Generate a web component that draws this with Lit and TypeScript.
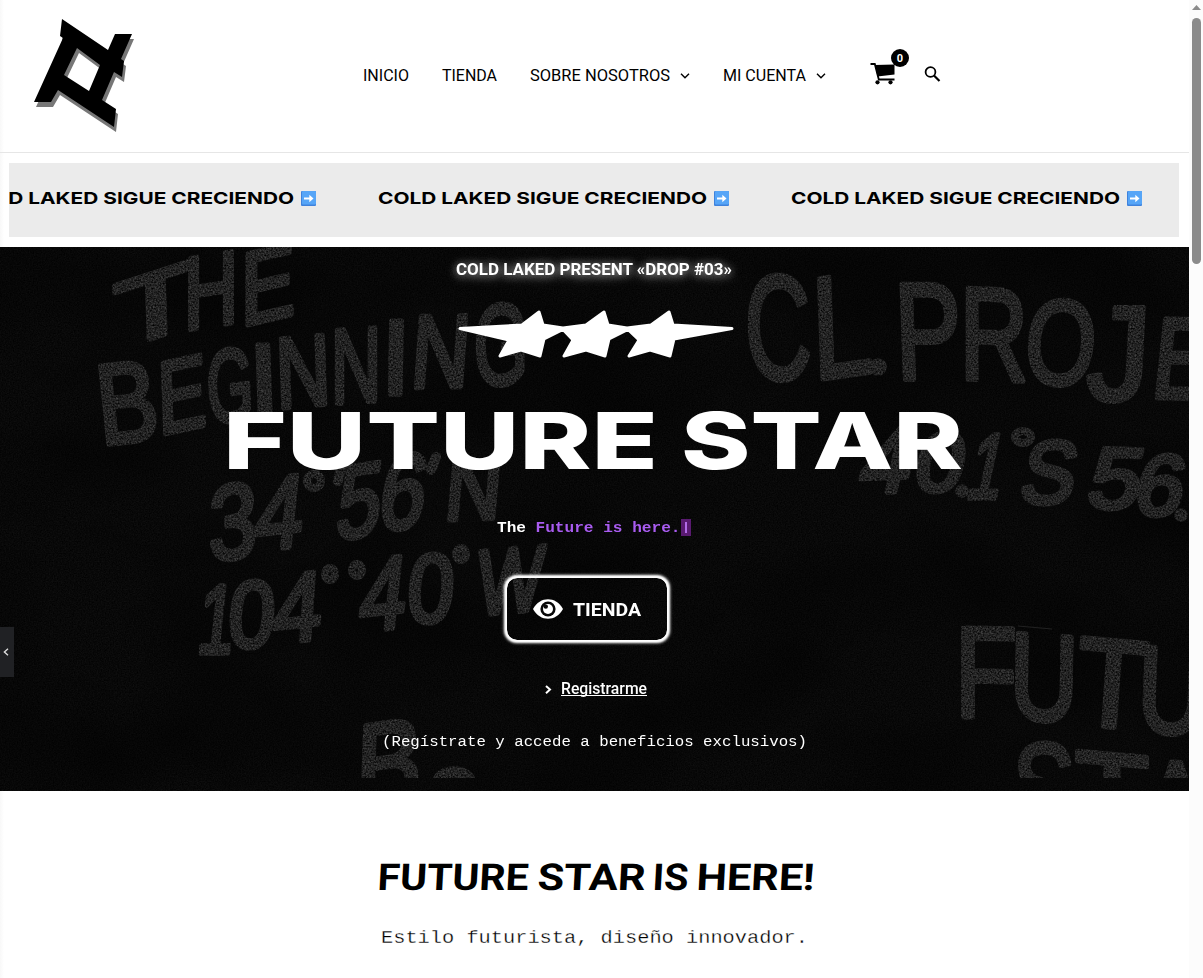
import { LitElement, html, svg, css } from "lit";
import { customElement } from "lit/decorators.js";

// One line of text set to an exact width; the baseline is the bottom edge.
const line = (text: string, w: number, h: number, cls: string) => html`<svg
  class="line ${cls}" width=${w} height=${h}
><text x="0" y=${h} textLength=${w} lengthAdjust="spacingAndGlyphs">${text}</text></svg>`;

// Chalk lettering: character, centre x, centre y, width, height, skewY, skewX
type Chalk = [string, number, number, number, number, number, number];
const CHALK: Chalk[] = [
  ["T", 156, 304, 84, 66, -18, 2], ["H", 211, 290, 54, 72, -9, 0], ["E", 268, 284, 54, 72, -13, 0],
  ["B", 127, 402, 60, 80, -6, 6], ["E", 182, 394, 48, 72, -12, 2], ["G", 230, 385, 46, 72, -6, 2],
  ["I", 264, 380, 28, 72, 0, 2], ["N", 303, 371, 54, 70, -5, 2], ["N", 356, 365, 50, 74, -4, 0],
  ["I", 396, 357, 28, 74, 0, -1], ["N", 441, 351, 58, 72, -1, -4], ["G", 501, 344, 54, 80, -4, 0],
  ["3", 233, 521, 48, 74, -8, 0], ["4", 280, 512, 48, 72, -6, -6], ["5", 360, 500, 44, 72, -8, -6],
  ["6", 404, 491, 46, 74, -4, -8], ["N", 474, 487, 56, 64, -2, -5],
  ["1", 217, 619, 36, 68, 0, -6], ["0", 252, 614, 46, 66, 0, -4], ["4", 298, 607, 48, 68, -6, -4],
  ["4", 384, 593, 46, 72, -6, -6], ["0", 431, 588, 46, 68, 0, -4], ["W", 511, 580, 66, 64, -5, -4],
  ["B", 389, 763, 66, 84, -8, -2], ["o", 454, 790, 54, 76, 0, 0],
  ["C", 778, 327, 66, 104, 0, 2], ["L", 842, 325, 60, 102, -8, 2], ["P", 928, 331, 66, 96, 0, 2],
  ["R", 994, 334, 68, 92, 2, 0], ["O", 1061, 342, 70, 84, 2, -4], ["J", 1119, 353, 62, 94, 0, -3],
  ["E", 1184, 358, 60, 80, 1, -6],
  ["4", 888, 460, 50, 64, -2, -12], ["0", 941, 462, 48, 58, 0, -10], ["1", 988, 466, 34, 64, 0, -12],
  ["S", 1050, 472, 54, 62, 0, -10], ["5", 1117, 478, 52, 60, 2, -12], ["6", 1161, 485, 48, 60, 0, -10],
  ["F", 986, 672, 62, 90, 1, 0], ["U", 1044, 677, 68, 86, 4, -1], ["T", 1112, 683, 70, 88, 5, -4],
  ["U", 1172, 690, 68, 86, 3, -2],
  ["S", 1044, 788, 62, 88, 0, 0], ["T", 1112, 795, 74, 84, 5, 0], ["A", 1176, 800, 60, 78, 3, 0],
];
const RINGS = [[314, 481, 7, 7], [330, 574, 5, 6], [357, 570, 5, 6], [461, 554, 5, 6], [1023, 437, 8, 6]];
const DOTS = [[878, 367, 7], [962, 491, 5], [1181, 515, 5]];

@customElement("app-root")
export class AppRoot extends LitElement {
  static styles = css`
    :host { display: block; width: 1203px; height: 978px; overflow: hidden; background: #fff; font-family: Roboto, "Liberation Sans", sans-serif; color: #000; }
    * { box-sizing: border-box; }
    svg { display: block; flex: none; overflow: visible; }
    .frame { display: flex; position: relative; height: 978px; }
    .page { width: 1189px; flex: none; background: linear-gradient(90deg, #f8f8f8, #fff 4px); }
    .scroll { width: 14px; background: #fcfcfc; padding: 5px 2px 0 3px; display: flex; flex-direction: column; gap: 8px; }
    .thumb { height: 246px; background: #8b8b8b; border-radius: 5px; }
    header { height: 153px; border-bottom: 1px solid #e6e6e6; display: flex; align-items: flex-start; padding: 19px 0 0 34px; }
    nav { display: flex; padding: 50px 0 0 226px; align-items: flex-start; }
    .line text { font-family: Roboto, sans-serif; font-size: 16px; }
    .inicio, .tienda { margin-right: 33px; }
    .arrow { margin: 4px 33px 0 10px; }
    .arrow.last { margin-right: 44px; }
    .cart { margin-top: -21px; margin-right: 14px; }
    .badge { font: 700 11px Roboto, sans-serif; fill: #fff; }
    .search { margin-top: -4px; }
    .band { margin: 10px 10px 10px 9px; height: 74px; background: #ebebeb; overflow: hidden; display: flex; }
    .track { display: flex; gap: 62px; padding-top: 29px; margin-left: -44px; }
    .item { display: flex; gap: 7px; flex: none; }
    .item .line text { font: 700 16.5px Inter, sans-serif; }
    .emoji { margin-top: -1px; }
    .hero { height: 544px; background: #080808; position: relative; overflow: hidden; color: #fff; }
    .art { position: absolute; inset: 0; }
    .chalk { font-family: "Liberation Sans", Arial, sans-serif; }
    .content { position: relative; display: flex; flex-direction: column; padding-top: 16px; }
    .line { fill: currentColor; }
    .drop { margin-left: 456px; filter: drop-shadow(0 0 4px rgba(255,255,255,.4)) drop-shadow(0 2px 5px rgba(255,255,255,.4)); }
    .drop text { font-weight: 700; }
    .stars { margin: 34px 0 0 457px; }
    .title { margin: 52px 0 0 228px; }
    .title text { font: 800 79px Inter, sans-serif; fill: #fff; }
    .typed { margin: 48px 0 0 497px; }
    .typed text { font: 700 15px "Liberation Mono", monospace; fill: #fff; }
    .typed .violet { fill: #a95cf0; }
    .button { margin: 42px 0 0 507px; width: 160px; height: 62px; border-radius: 10px; box-shadow: 0 0 3px 3px #fff, 0 0 2px 2px #fff; display: flex; align-items: center; gap: 10px; padding-left: 26px; }
    .button .line text { font-weight: 700; font-size: 18.5px; }
    .link { margin: 43px 0 0 545px; display: flex; gap: 10px; align-items: flex-start; color: #fff; text-decoration: none; }
    .link .caret { margin-top: 2px; }
    .link .word { border-bottom: 1px solid #fff; padding-bottom: 1px; }
    .link .line text { font-weight: 500; }
    .note { margin: 39px 0 0 382px; }
    .note text { font: 14px "Liberation Mono", monospace; fill: #fff; }
    .below { padding-top: 72px; display: flex; flex-direction: column; }
    .here { margin-left: 378px; }
    .here text { font: 700 37px Roboto, sans-serif; }
    .sub { margin: 40px 0 0 382px; }
    .sub text { font: 18.5px "Liberation Mono", monospace; fill: #000; stroke: #fff; stroke-width: .3px; }
    .tab { position: absolute; left: 0; top: 627px; width: 14px; height: 50px; background: #202124; display: flex; align-items: center; padding-left: 3px; }
  `;

  private art() {
    return html`<svg class="art" width="1189" height="544" viewBox="0 247 1189 544">
      <defs>
        <filter id="grain" x="0" y="0" width="100%" height="100%" color-interpolation-filters="sRGB">
          <feTurbulence type="fractalNoise" baseFrequency="0.75" numOctaves="2" seed="4"></feTurbulence>
          <feColorMatrix values="0.08 0 0 0 -0.007  0.08 0 0 0 -0.007  0.08 0 0 0 -0.007  0 0 0 0 1"></feColorMatrix>
        </filter>
        <filter id="folds" x="0" y="0" width="100%" height="100%" color-interpolation-filters="sRGB">
          <feTurbulence type="fractalNoise" baseFrequency="0.006 0.009" numOctaves="3" seed="9"></feTurbulence>
          <feColorMatrix values="0 0 0 0 0  0 0 0 0 0  0 0 0 0 0  0.9 0 0 0 -0.33"></feColorMatrix>
        </filter>
        <filter id="speckle" filterUnits="userSpaceOnUse" x="0" y="247" width="1189" height="544" color-interpolation-filters="sRGB">
          <feTurbulence type="fractalNoise" baseFrequency="0.6" numOctaves="2" seed="7" result="n"></feTurbulence>
          <feColorMatrix in="n" values="0.4 0 0 0 -0.065  0.4 0 0 0 -0.065  0.4 0 0 0 -0.065  0 0 0 0 1" result="c"></feColorMatrix>
          <feComposite in="c" in2="SourceGraphic" operator="in"></feComposite>
        </filter>
        <clipPath id="print"><rect x="0" y="247" width="1189" height="531"></rect></clipPath>
      </defs>
      <rect x="0" y="247" width="1189" height="544" filter="url(#grain)"></rect>
      <rect x="0" y="247" width="1189" height="544" filter="url(#folds)"></rect>
      <g clip-path="url(#print)"><g class="chalk" filter="url(#speckle)" stroke="#fff" stroke-width="5.500" stroke-linejoin="round" stroke-linecap="round" fill="#fff">
        ${CHALK.map(([ch, x, y, w, h, sy, sx]) => svg`<text
          transform="translate(${x} ${y}) skewY(${sy}) skewX(${sx})"
          x=${-w / 2} y=${h / 2} font-size=${h / 0.7} textLength=${w} lengthAdjust="spacingAndGlyphs">${ch}</text>`)}
        ${RINGS.map(([x, y, rx, ry]) => svg`<ellipse cx=${x} cy=${y} rx=${rx} ry=${ry} fill="none" stroke-width="8"></ellipse>`)}
        ${DOTS.map(([x, y, r]) => svg`<circle cx=${x} cy=${y} r=${r - 1}></circle>`)}
        <path d="M341 467l-3 14M436 457l-5 13" stroke-width="10"></path>
      </g></g>
      <path d="M1018 626l34 3" stroke="#222" stroke-width="1"></path>
    </svg>`;
  }

  private arrow(cls = "") {
    return html`<svg class="arrow ${cls}" width="10" height="6"><path d="M1 .8l4 4 4-4" fill="none" stroke="#000" stroke-width="1.4"></path></svg>`;
  }

  private item() {
    return html`<div class="item">
      ${line("COLD LAKED SIGUE CRECIENDO", 329, 12, "")}
      <svg class="emoji" width="15" height="15">
        <rect width="15" height="15" rx="1" fill="#3f82dc"></rect>
        <rect x="1" width="14" height="13.5" rx="1" fill="#56a5f7"></rect>
        <path d="M3 7.5h6" stroke="#fff" stroke-width="2"></path><path d="M8.300 3.800l4.200 3.700-4.200 3.700Z" fill="#fff"></path>
      </svg>
    </div>`;
  }

  render() {
    const mark = "M28 0L74 31 81 15H98L87 40 90 42 88 58 80 53 68 81 82 90 80 108 24 71 17 83H0L29 19 26 17ZM43 29L66 46 55 72 30 56Z";
    return html`<div class="frame">
      <div class="page">
        <header>
          <svg width="103" height="114">
            <path d=${mark} transform="translate(2 5)" fill="#777" fill-rule="evenodd"></path>
            <path d=${mark} fill-rule="evenodd"></path>
          </svg>
          <nav>
            ${line("INICIO", 46, 12, "inicio")}
            ${line("TIENDA", 55, 12, "tienda")}
            ${line("SOBRE NOSOTROS", 140, 12, "")}${this.arrow()}
            ${line("MI CUENTA", 83, 12, "")}${this.arrow("last")}
            <svg class="cart" width="40" height="37">
              <path d="M.5 16h4.300l4 15.500H24.500" fill="none" stroke="#000" stroke-width="1.8"></path>
              <path d="M5 17L24.500 16.500V26.500L7.500 28.500Z"></path>
              <circle cx="7.500" cy="34.300" r="2.100"></circle><circle cx="20.500" cy="34.300" r="2.100"></circle>
              <circle cx="30" cy="10" r="9"></circle>
              <text class="badge" x="30" y="13.500" text-anchor="middle">0</text>
            </svg>
            <svg class="search" width="17" height="17"><circle cx="6.500" cy="7" r="4.900" fill="none" stroke="#000" stroke-width="1.800"></circle><path d="M10 10.500l5.500 5.500" stroke="#000" stroke-width="2.200"></path></svg>
          </nav>
        </header>
        <div class="band"><div class="track">${this.item()}${this.item()}${this.item()}</div></div>
        <section class="hero">
          ${this.art()}
          <div class="content">
            ${line("COLD LAKED PRESENT «DROP #03»", 276, 12, "drop")}
            <svg class="stars" width="277" height="50"><path fill="#fff" stroke="#fff" stroke-width="3" stroke-linejoin="round"
              d="M3 19.500L65 16 82 3 86 16 106 19 129 16 147 3 151 16 170 19 194 16 212 3 216 16 275 19.500 217 30 213 47 193 41 172 47 182 31 171 20.500 152 30 148 47 129 41 107 47 116 31 106 20.500 87 30 83 47 64 41 43 47 52 31Z"></path></svg>
            <svg class="title" width="734" height="58">
              <text x="-5" y="58" textLength="435" lengthAdjust="spacingAndGlyphs">FUTURE</text>
              <text x="453" y="58" textLength="282" lengthAdjust="spacingAndGlyphs">STAR</text>
            </svg>
            <svg class="typed" width="195" height="19">
              <rect x="184" y="2" width="10" height="17" fill="#591a70"></rect>
              <rect x="188" y="5" width="2" height="11" fill="#b26be8"></rect>
              <text x="0" y="15" textLength="29" lengthAdjust="spacingAndGlyphs">The</text>
              <text class="violet" x="38.500" y="15" textLength="145" lengthAdjust="spacingAndGlyphs">Future is here.</text>
            </svg>
            <div class="button">
              <svg width="30" height="20"><path fill="#fff" d="M0 10C7-3 23-3 30 10 23 23 7 23 0 10Z"></path><circle cx="15" cy="10" r="7.600" fill="#080808"></circle><circle cx="15" cy="10" r="5" fill="#fff"></circle><circle cx="12.800" cy="7.600" r="2.200" fill="#080808"></circle></svg>
              ${line("TIENDA", 68, 13, "")}
            </div>
            <a class="link">
              <svg class="caret" width="6" height="9"><path d="M1 1l4 3.600-4 3.600" fill="none" stroke="#fff" stroke-width="2"></path></svg>
              <span class="word">${line("Registrarme", 86, 11, "")}</span>
            </a>
            <svg class="note" width="425" height="11"><text x="0" y="11" textLength="425" lengthAdjust="spacingAndGlyphs">(Regístrate y accede a beneficios exclusivos)</text></svg>
          </div>
        </section>
        <section class="below">
          <svg class="here" width="435" height="27"><g transform="translate(0 27) skewX(-3)">
            <text x="-1" textLength="151" lengthAdjust="spacingAndGlyphs">FUTURE</text>
            <text x="159" textLength="108" lengthAdjust="spacingAndGlyphs">STAR</text>
            <text x="274" textLength="36" lengthAdjust="spacingAndGlyphs">IS</text>
            <text x="318" textLength="118" lengthAdjust="spacingAndGlyphs">HERE!</text>
          </g></svg>
          <svg class="sub" width="425" height="13"><text x="-1" y="13" textLength="427" lengthAdjust="spacingAndGlyphs">Estilo futurista, diseño innovador.</text></svg>
        </section>
      </div>
      <div class="scroll">
        <svg width="9" height="5"><path d="M4.500 0L9 5H0Z" fill="#8b8b8b"></path></svg>
        <div class="thumb"></div>
      </div>
      <div class="tab"><svg width="6" height="8"><path d="M5 .8L1.400 4 5 7.200" fill="none" stroke="#ddd" stroke-width="1.400"></path></svg></div>
    </div>`;
  }
}
